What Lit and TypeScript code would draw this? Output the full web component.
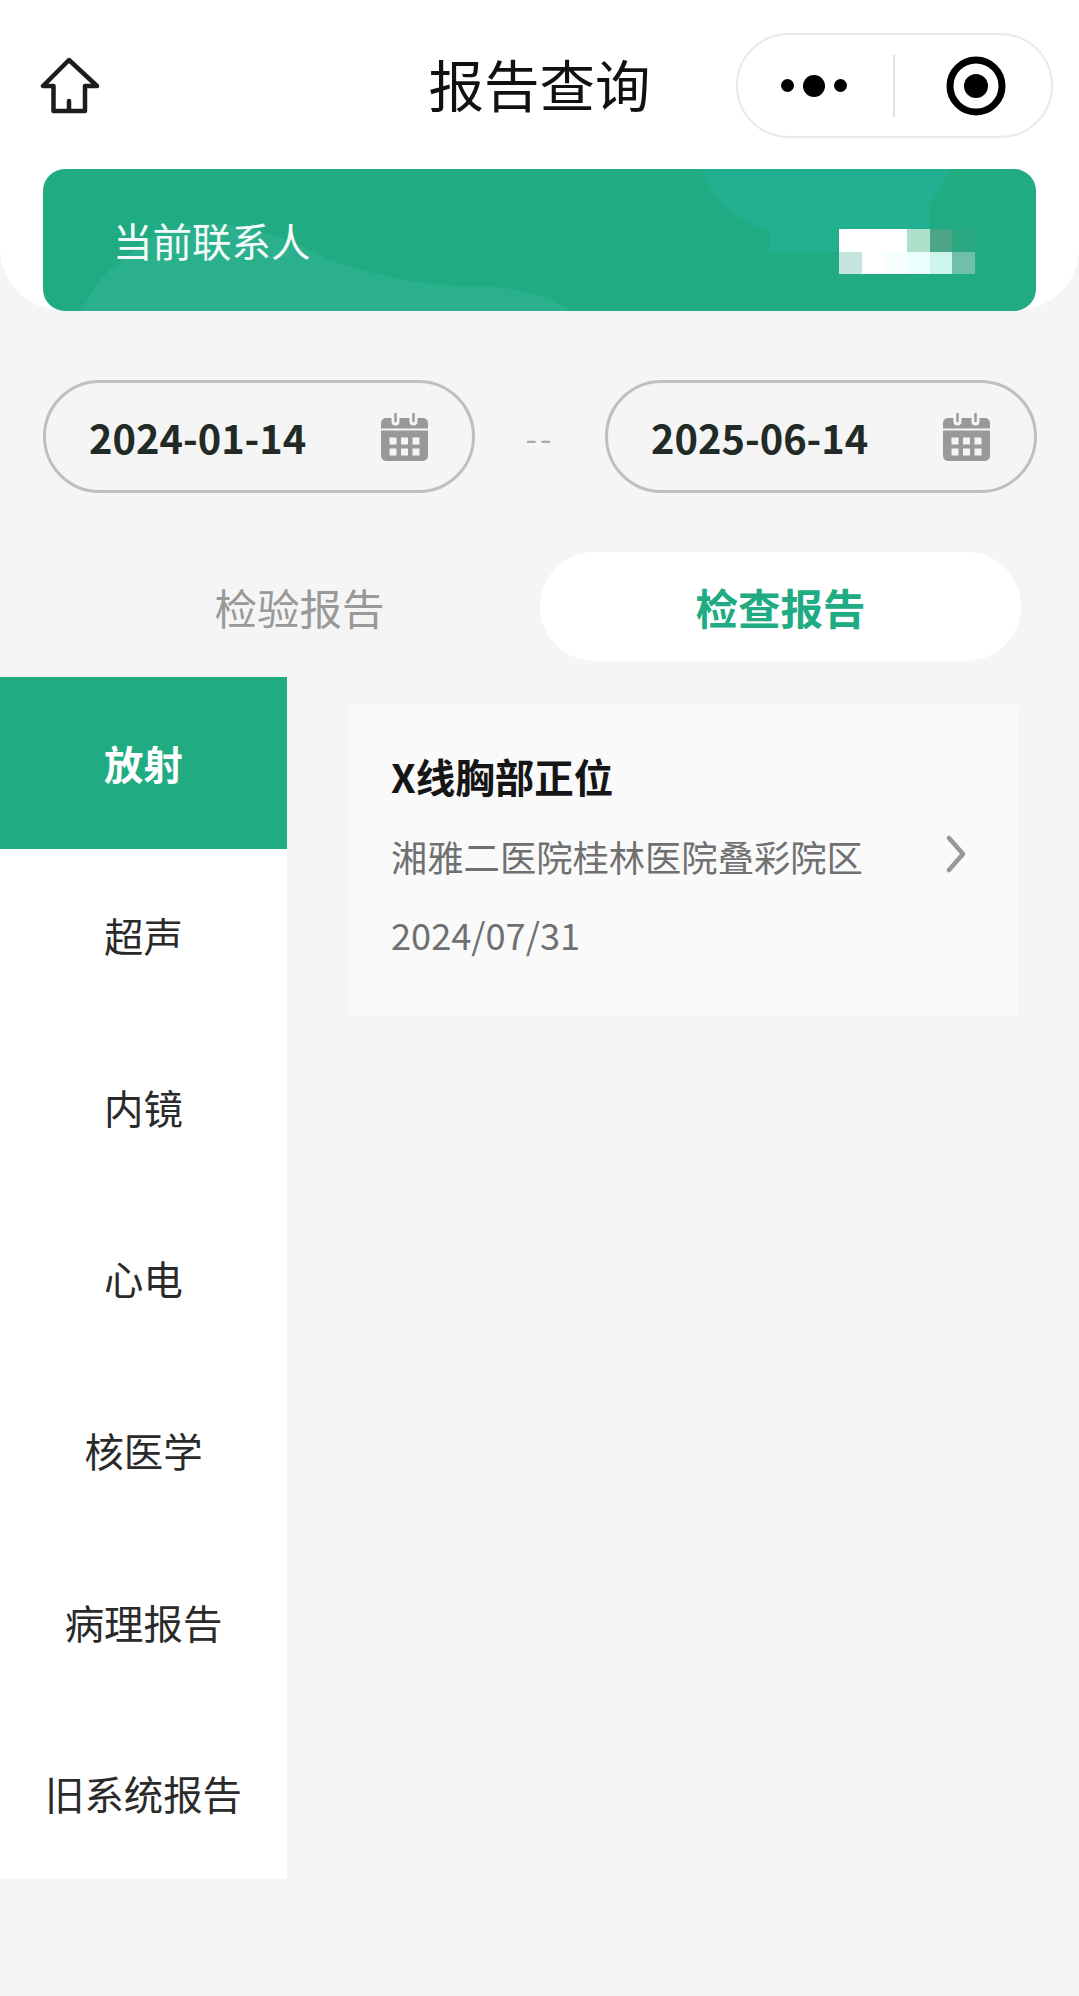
import { LitElement, html, css, svg } from "lit";
import { customElement } from "lit/decorators.js";

const calendar = html`<svg class="cal" viewBox="0 0 47 48" width="47" height="48">
  <path fill="#999" d="M5 5h5.5v3.5a4 4 0 0 0 8 0V5h10v3.5a4 4 0 0 0 8 0V5H42a5 5 0 0 1 5 5v5.5H0V10a5 5 0 0 1 5-5z"/>
  <path fill="#999" fill-rule="evenodd" d="M0 17.5h47V43a5 5 0 0 1-5 5H5a5 5 0 0 1-5-5zM8.500 24.500v7h7v-7zM20 24.500v7h7v-7zM31.500 24.500v7h7v-7zM8.500 35.500v7h7v-7zM20 35.500v7h7v-7zM31.500 35.500v7h7v-7z"/>
  <path stroke="#999" stroke-width="2.500" stroke-linecap="round" fill="none" d="M14.500 1v7M32.500 1v7"/>
</svg>`;

const mosaic = [
  "#ffffff", "#ffffff", "#ffffff", "#aee0cc", "#4aa686", "#2ba881",
  "#c5e6de", "#ffffff", "#f5fffe", "#ebfffd", "#cdf5ec", "#6fc0a8",
];

const items = ["放射", "超声", "内镜", "心电", "核医学", "病理报告", "旧系统报告"];

@customElement("app-root")
export class AppRoot extends LitElement {
  static styles = css`
    :host {
      display: block;
      width: 1079px;
      height: 1996px;
      background: #f5f5f5;
      font-family: "Noto Sans CJK SC", "Noto Sans", sans-serif;
      color: #222;
      overflow: hidden;
    }
    .top {
      background: #fff;
      height: 310px;
      border-radius: 0 0 62px 62px;
      padding-top: 33px;
      box-sizing: border-box;
    }
    .nav {
      display: grid;
      grid-template-columns: 1fr auto 1fr;
      align-items: center;
      padding: 0 26px;
      height: 105px;
    }
    .home { margin: 2px 0 0 14px; display: block; }
    .title { font-size: 55.500px; line-height: 70px; color: #111; margin-top: -5px; }
    .capsule {
      justify-self: end;
      width: 317px;
      height: 105px;
      box-sizing: border-box;
      border: 2px solid #e9e9e9;
      border-radius: 52.500px;
      display: flex;
      align-items: center;
    }
    .dots { width: 155px; display: flex; justify-content: center; align-items: center; gap: 9px; padding-right: 3px; box-sizing: border-box; }
    .dot { width: 13px; height: 13px; border-radius: 50%; background: #000; }
    .dot.big { width: 22px; height: 22px; }
    .sep { width: 2px; height: 62px; background: #e2e2e2; }
    .target { flex: 1; display: flex; justify-content: center; padding-left: 6px; }
    .banner {
      position: relative;
      margin: 31px 43px 0;
      height: 142px;
      border-radius: 22px;
      background: #20ab83;
      overflow: hidden;
      display: flex;
      align-items: center;
      justify-content: space-between;
      padding: 0 61px 0 70px;
      box-sizing: border-box;
    }
    .deco { position: absolute; inset: 0; }
    .contact { position: relative; font-size: 39.500px; color: #f4fbf8; line-height: 50px; }
    .mosaic {
      position: relative;
      display: grid;
      grid-template-columns: repeat(6, 22.67px);
      grid-auto-rows: 22.67px;
      margin-top: 23px;
    }
    .dates {
      display: flex;
      align-items: center;
      justify-content: space-between;
      margin: 70px 42px 0 43px;
    }
    .pill {
      width: 432px;
      height: 113px;
      box-sizing: border-box;
      border: 3px solid #bfbfbf;
      border-radius: 56.500px;
      display: flex;
      align-items: center;
      justify-content: space-between;
      padding: 0 44px 0 43px;
    }
    .date { font-size: 39.800px; font-weight: 700; color: #222a26; line-height: 56px; }
    .cal { display: block; }
    .dash { font-size: 33px; color: #aaa; line-height: 40px; letter-spacing: 3px; }
    .tabs {
      display: grid;
      grid-template-columns: 1fr 1fr;
      margin: 59px 58px 0 59px;
      height: 109px;
    }
    .tab {
      display: flex;
      align-items: center;
      justify-content: center;
      font-size: 42.500px;
      color: #999;
      border-radius: 55px;
    }
    .tab.on { background: #fff; color: #20ab83; font-weight: 700; }
    .body { display: flex; align-items: flex-start; margin-top: 16px; }
    .side { width: 287px; background: #fff; flex: none; }
    .item {
      height: 171.700px;
      display: flex;
      align-items: center;
      justify-content: center;
      font-size: 39.400px;
      color: #2a2a2a;
    }
    .item.on { background: #20ab83; color: #fff; font-weight: 700; }
    .card {
      margin: 28px 0 0 61px;
      width: 671px;
      height: 311px;
      box-sizing: border-box;
      background: #fafafa;
      padding: 45px 52px 0 43px;
      display: flex;
      align-items: center;
      justify-content: space-between;
    }
    .info { align-self: flex-start; }
    .name { font-size: 39.500px; font-weight: 700; color: #151515; line-height: 52px; }
    .loc { font-size: 36.300px; color: #707070; line-height: 50px; margin-top: 29px; }
    .when { font-size: 36.200px; color: #707070; line-height: 50px; margin-top: 28px; }
    .chev { display: block; margin-top: -58px; }
  `;

  render() {
    return html`
      <div class="top">
        <div class="nav">
          <svg class="home" width="60" height="60" viewBox="0 0 60 60">
            <path fill="none" stroke="#1c1c1c" stroke-width="4.500" stroke-linejoin="round" stroke-linecap="round"
              d="M29 3 L3 29 H13.500 V54 H45 V29 H57 Z M29 54 V44"/>
          </svg>
          <div class="title">报告查询</div>
          <div class="capsule">
            <div class="dots"><span class="dot"></span><span class="dot big"></span><span class="dot"></span></div>
            <div class="sep"></div>
            <div class="target">
              <svg width="60" height="60" viewBox="0 0 60 60">
                <circle cx="30" cy="30" r="26" fill="none" stroke="#000" stroke-width="7"/>
                <circle cx="30" cy="30" r="12" fill="#000"/>
              </svg>
            </div>
          </div>
        </div>
        <div class="banner">
          <svg class="deco" viewBox="0 0 993 142" width="993" height="142">
            ${svg`<path fill="#22b190" d="M659 0 C668 30 695 52 727 62 V83 H795 V60 H887 V36 L907 0 Z"/>
            <path fill="#2bb08d" d="M38 142 C50 120 62 100 74 98 C120 40 200 45 280 88 C340 112 400 118 452 118 C490 122 510 130 528 142 Z"/>`}
          </svg>
          <div class="contact">当前联系人</div>
          <div class="mosaic">
            ${mosaic.map((c) => html`<span style="background:${c}"></span>`)}
          </div>
        </div>
      </div>
      <div class="dates">
        <div class="pill"><span class="date">2024-01-14</span>${calendar}</div>
        <span class="dash">--</span>
        <div class="pill"><span class="date">2025-06-14</span>${calendar}</div>
      </div>
      <div class="tabs">
        <div class="tab">检验报告</div>
        <div class="tab on">检查报告</div>
      </div>
      <div class="body">
        <div class="side">
          ${items.map((t, i) => html`<div class="item ${i === 0 ? "on" : ""}">${t}</div>`)}
        </div>
        <div class="card">
          <div class="info">
            <div class="name">X线胸部正位</div>
            <div class="loc">湘雅二医院桂林医院叠彩院区</div>
            <div class="when">2024/07/31</div>
          </div>
          <svg class="chev" width="22" height="38" viewBox="0 0 22 38">
            <path fill="none" stroke="#999" stroke-width="4.500" stroke-linecap="round" stroke-linejoin="round" d="M4 3 L18 19 L4 35"/>
          </svg>
        </div>
      </div>
    `;
  }
}
